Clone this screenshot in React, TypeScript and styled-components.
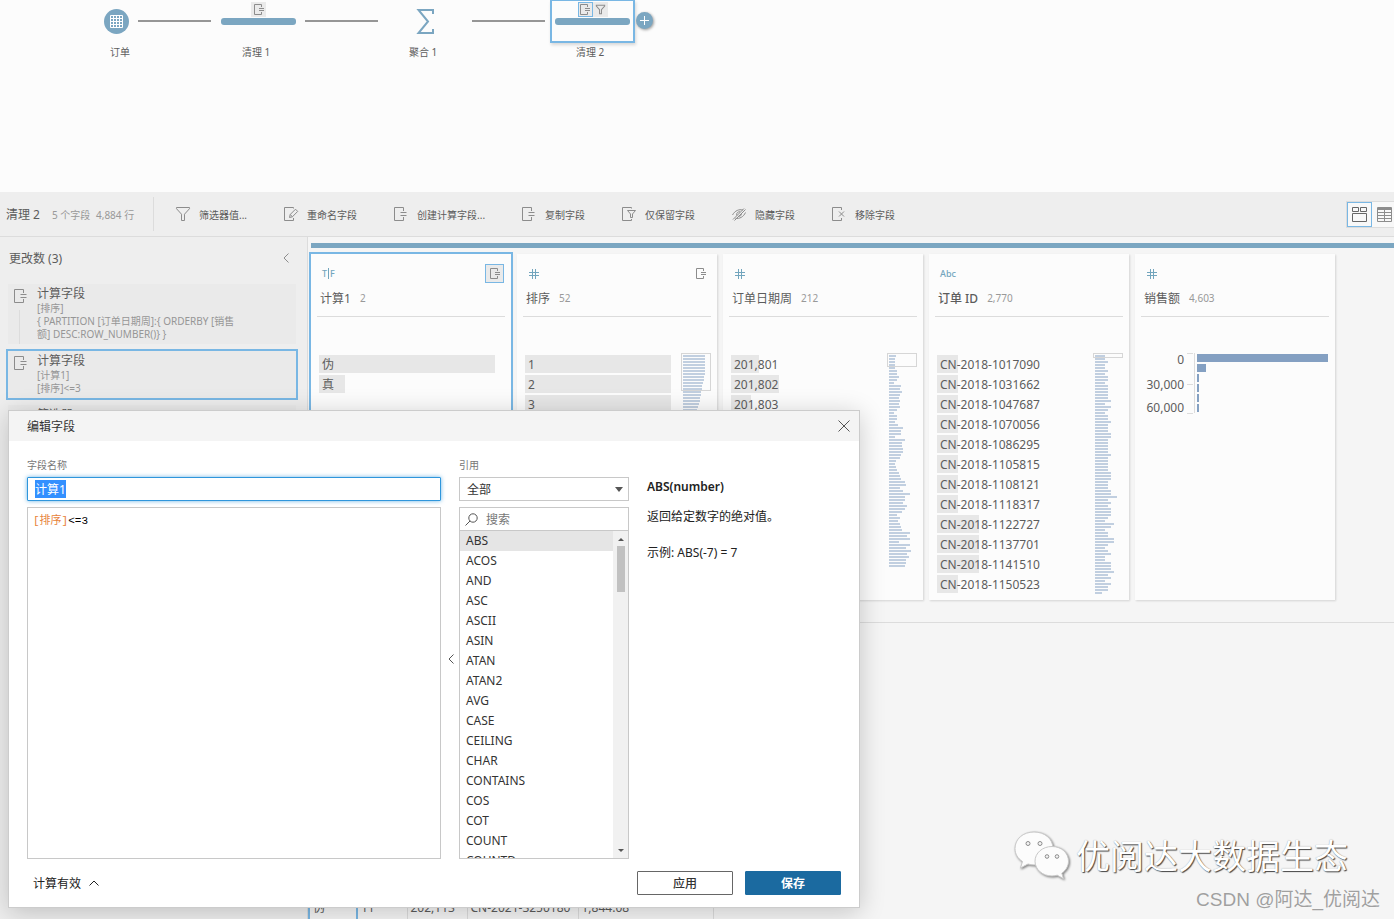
import React, { useEffect, useRef } from "react";
import styled, { createGlobalStyle, css } from "styled-components";

const FONT = '"Noto Sans", "Noto Sans CJK SC", sans-serif';
const BLUE = "#7ba6c1";
const SELECT = "#79b7e4";

const GlobalStyle = createGlobalStyle`
  *, *::before, *::after { box-sizing: border-box; }
  body { margin: 0; font-family: ${FONT}; font-size: 12px; color: #5c5c5c; background: #f5f5f5; }
  button, input, select, textarea { font: inherit; color: inherit; margin: 0; }
  button { padding: 0; border: 0; background: none; cursor: pointer; }
  ul { margin: 0; padding: 0; list-style: none; }
  p, h1, h2, h3 { margin: 0; font-size: inherit; font-weight: 400; }
`;

const Page = styled.div`
  position: relative;
  display: flex;
  flex-direction: column;
  height: 100vh;
  overflow: hidden;
`;

/* ---------- icons ---------- */

const Svg = styled.svg`
  display: block;
  flex: none;
  fill: none;
  stroke: currentColor;
  overflow: visible;
`;

const CalcIcon = ({ small = false }: { small?: boolean }) =>
  small ? (
    <Svg width="10" height="11" viewBox="0 0 10 11">
      <path d="M7.5 3V.5h-7v10h7V8M5 4.5h5M5 6.5h5" />
    </Svg>
  ) : (
    <Svg width="14" height="14" viewBox="0 0 14 14">
      <path d="M9.500 4V.5h-9v13h9V10M6.500 5.500h6M6.500 8.500h6" />
    </Svg>
  );

const FilterIcon = ({ size = 14 }: { size?: number }) => (
  <Svg width={size} height={size} viewBox="0 0 14 14" strokeWidth={size < 14 ? 1.6 : 1}>
    <path d="M.5.5h13v1.2L8.500 7.200v6.300h-3V7.200L.5 1.700z" />
  </Svg>
);

const RenameIcon = () => (
  <Svg width="14" height="14" viewBox="0 0 14 14">
    <path d="M9.500 1.500v-1h-9v13h9V11" />
    <path d="M5.500 10.500l.7-3 5.300-5.300 2.200 2.200-5.300 5.400zM6.200 7.500l2.200 2.200" />
  </Svg>
);

const KeepIcon = () => (
  <Svg width="14" height="14" viewBox="0 0 14 14">
    <path d="M9.500 1.500v-1h-9v13h9V12" />
    <path d="M5.500 3.500h8L10.500 7v3.500h-2V7z" />
  </Svg>
);

const HideIcon = () => (
  <Svg width="14" height="14" viewBox="0 0 14 14">
    <path d="M.5 8C3 3.500 7 2 11 3M13.500 5.500C11.500 10 7.500 12 3.500 11.300M1 12.500L12 1.500M2.500 13.500L13.500 2.500" />
    <path d="M4.800 8.500C4 6 6 4.500 8 4.800M9.500 6.500C9.500 8.500 8 9.500 6.500 9.300" />
  </Svg>
);

const RemoveIcon = () => (
  <Svg width="14" height="14" viewBox="0 0 14 14">
    <path d="M9.500 3V.5h-9v13h9V11M7 4.500l5 5M12 4.500l-5 5" />
  </Svg>
);

const HashIcon = () => (
  <Svg width="11" height="10" viewBox="0 0 11 10">
    <path d="M4.500 0v10M7.500 0v10M1 3.500h10M1 6.500h10" />
  </Svg>
);

const Chevron = ({ dir = "left" }: { dir?: "left" | "up" }) =>
  dir === "left" ? (
    <Svg width="6" height="10" viewBox="0 0 6 10">
      <path d="M5.500.5L1 5l4.500 4.500" />
    </Svg>
  ) : (
    <Svg width="10" height="6" viewBox="0 0 10 6">
      <path d="M.5 5.500L5 1l4.500 4.500" />
    </Svg>
  );

/* ---------- flow canvas ---------- */

const Canvas = styled.section`
  position: relative;
  flex: none;
  height: 192px;
  background: #fcfcfc;
`;

const Node = styled.div<{ $x: number; $w: number; $selected?: boolean }>`
  position: absolute;
  left: ${(p) => p.$x}px;
  top: 0;
  width: ${(p) => p.$w}px;
  height: 43px;
  display: flex;
  flex-direction: column;
  align-items: center;
  ${(p) =>
    p.$selected &&
    css`
      border: 2px solid ${SELECT};
      border-top-width: 1px;
      box-shadow: 1px 2px 3px rgba(0, 0, 0, 0.15);
    `}
`;

const NodeLabel = styled.span<{ $x: number }>`
  position: absolute;
  left: ${(p) => p.$x}px;
  top: 44px;
  font-size: 10px;
  line-height: 16px;
`;

const Badges = styled.div<{ $pad: number }>`
  display: flex;
  padding-top: ${(p) => p.$pad}px;
  padding-bottom: 1px;
`;

const Badge = styled.span<{ $on?: boolean }>`
  display: flex;
  align-items: center;
  justify-content: center;
  width: 15px;
  height: 15px;
  color: #8c8c8c;
  background: #eaeaea;
  border: ${(p) => (p.$on ? `1px solid ${SELECT}` : "0")};
`;

const StepBar = styled.div`
  width: 75px;
  height: 7px;
  border-radius: 3px;
  background: ${BLUE};
`;

const Link = styled.div<{ $x: number }>`
  position: absolute;
  left: ${(p) => p.$x}px;
  top: 20px;
  width: 73px;
  height: 2px;
  background: #969696;
`;

const Round = styled.div<{ $x: number; $y: number; $d: number }>`
  position: absolute;
  left: ${(p) => p.$x}px;
  top: ${(p) => p.$y}px;
  width: ${(p) => p.$d}px;
  height: ${(p) => p.$d}px;
  display: flex;
  align-items: center;
  justify-content: center;
  border-radius: 50%;
  background: ${BLUE};
  color: #fff;
`;

const AddButton = styled.button`
  position: absolute;
  left: 636px;
  top: 12px;
  width: 17px;
  height: 17px;
  display: flex;
  align-items: center;
  justify-content: center;
  border-radius: 50%;
  background: ${BLUE};
  color: #fff;
  box-shadow: 1px 1px 3px rgba(0, 0, 0, 0.4);
`;

/* ---------- toolbar ---------- */

const Toolbar = styled.header`
  display: flex;
  align-items: center;
  flex: none;
  height: 45px;
  padding-left: 6px;
  background: #eee;
  border-bottom: 1px solid #dcdcdc;
`;

const Summary = styled.div`
  display: flex;
  align-items: center;
  width: 148px;
  height: 34px;
  border-right: 1px solid #dcdcdc;
  white-space: nowrap;
`;

const StepTitle = styled.h1`
  width: 46px;
`;

const Count = styled.span`
  width: 44px;
  font-size: 10px;
  color: #999;
`;

const Tools = styled.nav`
  display: flex;
  gap: 37px;
  padding-left: 22px;
`;

const Tool = styled.button`
  display: flex;
  align-items: center;
  gap: 9px;
  height: 24px;
  font-size: 10px;
  white-space: nowrap;
  svg { color: #8c8c8c; }
`;

const Views = styled.div`
  display: flex;
  margin-left: auto;
  height: 27px;
  border: 1px solid #dcdcdc;
  border-right: 0;
  background: #f8f8f8;
`;

const ViewButton = styled.button<{ $on?: boolean }>`
  display: flex;
  align-items: center;
  justify-content: center;
  width: ${(p) => (p.$on ? 25 : 22)}px;
  padding-left: ${(p) => (p.$on ? 0 : 3)}px;
  border: ${(p) => (p.$on ? `1px solid ${SELECT}` : "0")};
  color: ${(p) => (p.$on ? "#666" : "#8c8c8c")};
`;

/* ---------- changes panel ---------- */

const Workspace = styled.div`
  display: flex;
  flex: 1;
  min-height: 0;
`;

const Side = styled.aside`
  flex: none;
  width: 308px;
  background: #eee;
  border-right: 1px solid #dcdcdc;
`;

const SideHead = styled.div`
  display: flex;
  align-items: center;
  justify-content: space-between;
  height: 42px;
  padding: 0 18px 0 9px;
  button { color: #8c8c8c; }
`;

const Changes = styled.ul`
  display: flex;
  flex-direction: column;
  gap: 7px;
  padding: 5px 11px 0 8px;
`;

const Change = styled.li<{ $on?: boolean }>`
  display: flex;
  gap: 9px;
  padding: 0 50px 3px 6px;
  background: #eaeaea;
  outline: ${(p) => (p.$on ? `2px solid ${SELECT}` : "0")};
`;

const ChangeMark = styled.div`
  display: flex;
  flex-direction: column;
  gap: 7px;
  width: 14px;
  padding-top: 5px;
  color: #8c8c8c;
`;

const Rail = styled.i`
  flex: 1;
  width: 1px;
  margin: 0 0 -3px 5px;
  background: #dcdcdc;
`;

const ChangeTitle = styled.h3`
  height: 18px;
  line-height: 20px;
`;

const ChangeText = styled.p`
  font-size: 10px;
  line-height: 13px;
  color: #969696;
`;

/* ---------- profile cards ---------- */

const Main = styled.main`
  display: flex;
  flex-direction: column;
  flex: 1;
  min-width: 0;
`;

const Profile = styled.section`
  flex: none;
  padding: 6px 0 22px 3px;
  border-bottom: 1px solid #dcdcdc;
`;

const StepStrip = styled.div`
  height: 5px;
  background: ${BLUE};
`;

const Cards = styled.div`
  display: flex;
  gap: 6px;
  margin-top: 6px;
`;

const Card = styled.article<{ $on?: boolean }>`
  flex: none;
  width: 200px;
  background: #fcfcfc;
  outline: ${(p) => (p.$on ? `2px solid ${SELECT}` : "0")};
  box-shadow: 1px 1px 2px rgba(0, 0, 0, 0.14);
`;

const CardTop = styled.div`
  display: flex;
  align-items: center;
  justify-content: space-between;
  height: 29px;
  padding: 10px 7px 0 11px;
  color: #72a5bd;
`;

const TypeText = styled.span`
  display: flex;
  font-size: 9px;
  font-weight: 500;
  line-height: 11px;
`;

const TypeRule = styled.i`
  width: 1px;
  margin: 0 1px;
  background: currentColor;
`;

const CardAction = styled.button<{ $on?: boolean }>`
  display: flex;
  align-items: center;
  justify-content: center;
  width: 19px;
  height: 19px;
  color: #8c8c8c;
  background: ${(p) => (p.$on ? "#eaeaea" : "none")};
  border: ${(p) => (p.$on ? `1px solid ${SELECT}` : "0")};
`;

const CardName = styled.div`
  display: flex;
  align-items: center;
  gap: 9px;
  height: 34px;
  margin: 0 6px;
  padding: 0 3px 4px;
  border-bottom: 1px solid #dcdcdc;
`;

const Name = styled.h2<{ $strong?: boolean }>`
  font-weight: ${(p) => (p.$strong ? 500 : 400)};
`;

const Distinct = styled.span`
  font-size: 10px;
  color: #999;
`;

const CardBody = styled.div`
  display: flex;
  padding: 36px 6px 5px 8px;
`;

const Values = styled.ul`
  display: flex;
  flex-direction: column;
  flex: 1;
  gap: 2px;
  padding-top: 2px;
`;

const Value = styled.li`
  display: grid;
  align-items: start;
  height: 18px;
  white-space: nowrap;
  > * { grid-area: 1 / 1; }
`;

const ValueBar = styled.i`
  height: 18px;
  background: #e7e7e7;
`;

const ValueText = styled.span`
  padding-left: 3px;
  line-height: 20px;
`;

const Chart = styled.svg`
  display: block;
  flex: none;
  overflow: visible;
`;

const MiniMap = ({ widths, frame }: { widths: number[]; frame: number }) => (
  <Chart width="30" height={widths.length * 3 + 2}>
    {widths.map((w, i) => (
      <rect key={i} x="2" y={2 + i * 3} width={w} height="2" fill="#c1cfe0" />
    ))}
    <rect x=".5" y=".5" width="29" height={frame - 1} fill="none" stroke="#d6d6d6" />
  </Chart>
);

const Histogram = () => (
  <Chart width="186" height="64" fontSize="12" fill="#5c5c5c">
    {([["0", 11], ["30,000", 36], ["60,000", 59]] as [string, number][]).map(([t, y]) => (
      <text key={t} x="41" y={y} textAnchor="end">{t}</text>
    ))}
    <path d="M51.500 0v60M44 .5h6M44 31.500h6M44 60.500h6" stroke="#dcdcdc" fill="none" />
    {[131, 9, 2, 2, 2, 2].map((w, i) => (
      <rect key={i} x="54" y={1 + i * 10} width={w} height="8" fill="#84a0c2" />
    ))}
  </Chart>
);

/* ---------- data grid ---------- */

const GridPane = styled.section`
  display: flex;
  flex: 1;
  align-items: flex-end;
  min-height: 0;
`;

const Table = styled.table`
  border-collapse: collapse;
  table-layout: fixed;
  width: 404px;
`;

const Cell = styled.td<{ $w: number; $on?: boolean }>`
  width: ${(p) => p.$w}px;
  height: 22px;
  padding: 0 3px;
  line-height: 20px;
  white-space: nowrap;
  border-right: 1px solid #dcdcdc;
  ${(p) =>
    p.$on &&
    css`
      border-left: 2px solid ${SELECT};
      border-right: 2px solid ${SELECT};
    `}
`;

/* ---------- dialog ---------- */

const Dialog = styled.form`
  position: absolute;
  left: 8px;
  top: 410px;
  bottom: 11px;
  width: 852px;
  display: flex;
  flex-direction: column;
  color: #333;
  background: #fff;
  border: 1px solid #ccc;
  box-shadow: 0 4px 24px rgba(0, 0, 0, 0.2);
`;

const DialogHead = styled.div`
  display: flex;
  align-items: center;
  justify-content: space-between;
  flex: none;
  height: 30px;
  padding: 0 9px 0 18px;
  background: #f4f4f4;
  button { color: #555; }
`;

const DialogBody = styled.div`
  display: flex;
  flex: 1;
  min-height: 0;
  padding: 16px 18px 0;
`;

const Column = styled.div<{ $w: number }>`
  display: flex;
  flex-direction: column;
  width: ${(p) => p.$w}px;
`;

const Label = styled.label`
  height: 20px;
  font-size: 10px;
  line-height: 16px;
  color: #777;
`;

const NameInput = styled.input`
  height: 24px;
  padding: 0 7px;
  border: 1px solid #2f96dc;
  border-radius: 1px;
  outline: 0;
  background: #fff;
  box-shadow: 0 0 4px rgba(47, 150, 220, 0.7);
  &::selection { color: #fff; background: #3390ff; }
`;

const Editor = styled.div`
  display: grid;
  flex: 1;
  min-height: 0;
  margin-top: 6px;
  border: 1px solid #c8c8c8;
  font-family: "Liberation Mono", "Noto Sans CJK SC", monospace;
  font-size: 11px;
  line-height: 16px;
  > * { grid-area: 1 / 1; }
`;

const Highlight = styled.pre`
  margin: 0;
  padding: 5px;
  font: inherit;
  color: #000;
`;

const FieldToken = styled.span`
  color: #e8833a;
`;

const Formula = styled.textarea`
  padding: 5px;
  border: 0;
  outline: 0;
  resize: none;
  color: transparent;
  caret-color: #000;
  background: none;
`;

const Collapse = styled.button`
  align-self: center;
  display: flex;
  justify-content: center;
  width: 18px;
  padding: 2px 0 0 1px;
  color: #555;
`;

const SelectWrap = styled.div`
  display: grid;
  align-items: center;
  > * { grid-area: 1 / 1; }
  svg { justify-self: end; margin-right: 6px; pointer-events: none; }
`;

const Select = styled.select`
  height: 24px;
  padding: 0 7px;
  border: 1px solid #c8c8c8;
  border-radius: 0;
  background: #fff;
  appearance: none;
`;

const Search = styled.div`
  display: flex;
  align-items: center;
  gap: 8px;
  flex: none;
  height: 24px;
  margin-top: 6px;
  padding-left: 5px;
  color: #555;
  border: 1px solid #c8c8c8;
  input { flex: 1; min-width: 0; padding: 0; border: 0; outline: 0; background: none; }
  input::placeholder { color: #777; opacity: 1; }
`;

const ListBox = styled.div`
  display: flex;
  flex: 1;
  min-height: 0;
  border: 1px solid #c8c8c8;
  border-top: 0;
`;

const Functions = styled.ul`
  flex: 1;
  overflow: hidden;
`;

const FunctionItem = styled.li<{ $on?: boolean }>`
  height: 20px;
  padding-left: 6px;
  line-height: 20px;
  background: ${(p) => (p.$on ? "#e5e5e5" : "none")};
`;

const Scrollbar = styled.div`
  display: flex;
  flex-direction: column;
  align-items: center;
  width: 15px;
  padding: 7px 0 6px;
  background: #f1f1f1;
`;

const Thumb = styled.i`
  width: 8px;
  height: 46px;
  margin: 5px 0 auto;
  background: #c1c1c1;
`;

const Help = styled.div`
  display: flex;
  flex: 1;
  flex-direction: column;
  gap: 12px;
  padding: 21px 0 0 18px;
  line-height: 18px;
  color: #222;
`;

const HelpTitle = styled.h3`
  font-weight: 600;
`;

const Example = styled.p`
  padding-top: 6px;
`;

const DialogFoot = styled.div`
  display: flex;
  align-items: center;
  flex: none;
  gap: 12px;
  height: 48px;
  padding: 0 18px 0 24px;
`;

const Status = styled.button`
  display: flex;
  align-items: center;
  gap: 8px;
  margin-right: auto;
  color: #222;
`;

const Action = styled.button<{ $primary?: boolean }>`
  width: 96px;
  height: 24px;
  border: 1px solid ${(p) => (p.$primary ? "#1b6aa0" : "#666")};
  border-radius: 1px;
  color: ${(p) => (p.$primary ? "#fff" : "#333")};
  background: ${(p) => (p.$primary ? "#1b6aa0" : "#fff")};
  font-weight: ${(p) => (p.$primary ? 700 : 500)};
`;

/* ---------- watermarks ---------- */

const Brand = styled.div`
  position: absolute;
  right: 46px;
  bottom: 37px;
  display: flex;
  align-items: center;
  gap: 6px;
  font-size: 34px;
  line-height: 52px;
  color: #fff;
  text-shadow: 1px 1px 1px #444, 0 0 1px #999;
  svg { filter: drop-shadow(1px 1px 1px rgba(0, 0, 0, 0.5)); }
`;

const Credit = styled.div`
  position: absolute;
  right: 14px;
  bottom: 5px;
  font-family: "Liberation Sans", "Noto Sans CJK SC", sans-serif;
  font-size: 19px;
  line-height: 28px;
  color: #a0a0a0;
  text-shadow: 0 0 1px #fff;
`;

const WeChat = () => (
  <svg width="56" height="50" viewBox="0 0 56 50" fill="#fcfcfc" stroke="#c8c8c8" strokeWidth="1">
    <path d="M20 1C9 1 1 8 1 17.500c0 5.500 2.800 10 7.500 13L6.500 37l7.500-4c2 .6 4 .9 6 .9C31 34 39 27 39 17.500S31 1 20 1z" />
    <path d="M38 15.500c-9.500 0-17 6.500-17 14.700S28.500 45 38 45c1.800 0 3.600-.3 5.200-.8l6.300 3.500-1.700-5.500c4-2.700 6.700-7 6.700-12 0-8.200-7-14.700-16.500-14.700z" />
    <g fill="#f4f4f4" stroke="#8c8c8c">
      <circle cx="14" cy="12.500" r="2" />
      <circle cx="26" cy="12.500" r="2" />
      <circle cx="33" cy="25.500" r="1.800" />
      <circle cx="43" cy="25.500" r="1.800" />
    </g>
  </svg>
);

/* ---------- data ---------- */

const tools: [string, React.ReactNode][] = [
  ["筛选器值...", <FilterIcon />],
  ["重命名字段", <RenameIcon />],
  ["创建计算字段...", <CalcIcon />],
  ["复制字段", <CalcIcon />],
  ["仅保留字段", <KeepIcon />],
  ["隐藏字段", <HideIcon />],
  ["移除字段", <RemoveIcon />],
];

type ChangeData = { title: string; lines: string[]; rail?: boolean; on?: boolean };

const changes: ChangeData[] = [
  { title: "计算字段", lines: ["[排序]", "{ PARTITION [订单日期周]:{ ORDERBY [销售额] DESC:ROW_NUMBER()} }"], rail: true },
  { title: "计算字段", lines: ["[计算1]", "[排序]<=3"], on: true },
  { title: "筛选器", lines: [] },
];

const rankMap = [22, 22, 22, 22, 22, 22, 22, 21, 21, 20, 19, 19, 18, 18, 17, 17, 16, 15, 14, 14, 13, 12];

const weekMap = [
  7, 6, 6, 6, 6, 8, 8, 10, 8, 5, 12, 11, 13, 11, 10, 11, 10, 11, 8, 5, 8, 8, 6, 9, 14, 12, 12, 6, 16, 13, 13, 14, 14,
  12, 11, 7, 6, 7, 8, 10, 11, 12, 16, 17, 11, 14, 21, 16, 16, 14, 18, 16, 13, 8, 11, 9, 11, 12, 13, 21, 18, 21, 10, 21,
  17, 22, 18, 20, 17, 17, 16,
];

const orderMap = [
  10, 10, 13, 10, 10, 13, 10, 13, 13, 10, 13, 13, 13, 13, 13, 16, 10, 16, 13, 10, 13, 13, 16, 13, 13, 13, 16, 16, 13,
  13, 13, 13, 13, 16, 13, 13, 13, 13, 13, 16, 16, 16, 13, 13, 13, 16, 16, 22, 13, 16, 13, 16, 16, 16, 13, 10, 19, 16,
  10, 13, 13, 19, 19, 13, 10, 13, 16, 10, 10, 16, 16, 16, 19, 13, 16, 10, 16, 13, 13, 7,
];

const orders: [string, number][] = [
  ["CN-2018-1017090", 21], ["CN-2018-1031662", 21], ["CN-2018-1047687", 21], ["CN-2018-1070056", 21],
  ["CN-2018-1086295", 21], ["CN-2018-1105815", 21], ["CN-2018-1108121", 21], ["CN-2018-1118317", 21],
  ["CN-2018-1122727", 42], ["CN-2018-1137701", 42], ["CN-2018-1141510", 42], ["CN-2018-1150523", 21],
];

type CardData = {
  name: string;
  count: string;
  type: React.ReactNode;
  on?: boolean;
  strong?: boolean;
  calc?: boolean;
  values?: [string, number][];
  map?: number[];
  frame?: number;
};

const cards: CardData[] = [
  {
    name: "计算1",
    count: "2",
    type: <TypeText>T<TypeRule />F</TypeText>,
    on: true,
    calc: true,
    values: [["伪", 176], ["真", 26]],
  },
  { name: "排序", count: "52", type: <HashIcon />, calc: true, values: [["1", 146], ["2", 146], ["3", 146]], map: rankMap, frame: 38 },
  { name: "订单日期周", count: "212", type: <HashIcon />, values: [["201,801", 28], ["201,802", 48], ["201,803", 20]], map: weekMap, frame: 14 },
  { name: "订单 ID", count: "2,770", type: <TypeText>Abc</TypeText>, strong: true, values: orders, map: orderMap, frame: 5 },
  { name: "销售额", count: "4,603", type: <HashIcon /> },
];

const functions = [
  "ABS", "ACOS", "AND", "ASC", "ASCII", "ASIN", "ATAN", "ATAN2", "AVG", "CASE", "CEILING", "CHAR", "CONTAINS", "COS",
  "COT", "COUNT", "COUNTD",
];

/* ---------- views ---------- */

const FlowCanvas = () => (
  <Canvas>
    <Round $x={104} $y={9} $d={25}>
      <Svg width="13" height="13" viewBox="0 0 13 13">
        <path d="M.5.5h12v12H.5zM.5 3.500h12M.5 6.500h12M.5 9.500h12M3.500 0v13M6.500 0v13M9.500 0v13" />
      </Svg>
    </Round>
    <NodeLabel $x={110}>订单</NodeLabel>
    <Link $x={138} />
    <Node $x={221} $w={75}>
      <Badges $pad={2}>
        <Badge><CalcIcon small /></Badge>
      </Badges>
      <StepBar />
    </Node>
    <NodeLabel $x={242}>清理 1</NodeLabel>
    <Link $x={305} />
    <Node $x={416} $w={19}>
      <svg width="19" height="35" fill="none" stroke={BLUE} strokeWidth="2">
        <path d="M17 14V10H2.500L12 21.500 2.500 33H17v-4" />
      </svg>
    </Node>
    <NodeLabel $x={409}>聚合 1</NodeLabel>
    <Link $x={472} />
    <Node $x={550} $w={85} $selected>
      <Badges $pad={1}>
        <Badge $on><CalcIcon small /></Badge>
        <Badge><FilterIcon size={9} /></Badge>
      </Badges>
      <StepBar />
    </Node>
    <NodeLabel $x={576}>清理 2</NodeLabel>
    <AddButton type="button" aria-label="添加步骤">
      <Svg width="9" height="9" viewBox="0 0 9 9">
        <path d="M4.500 0v9M0 4.500h9" />
      </Svg>
    </AddButton>
  </Canvas>
);

const StepToolbar = () => (
  <Toolbar>
    <Summary>
      <StepTitle>清理 2</StepTitle>
      <Count>5 个字段</Count>
      <Count>4,884 行</Count>
    </Summary>
    <Tools>
      {tools.map(([label, icon]) => (
        <Tool key={label} type="button">
          {icon}
          {label}
        </Tool>
      ))}
    </Tools>
    <Views>
      <ViewButton $on type="button" aria-label="配置文件视图">
        <Svg width="15" height="15" viewBox="0 0 15 15">
          <path d="M.5.5h6v4h-6zM8.500.5h6v4h-6zM.5 6.500h14v8H.5z" />
        </Svg>
      </ViewButton>
      <ViewButton type="button" aria-label="数据网格视图">
        <Svg width="15" height="15" viewBox="0 0 15 15">
          <path d="M.5.5h14v14H.5zM.5 1.500h14M.5 2.500h14M.5 5.500h14M.5 8.500h14M.5 11.500h14M7.500 3v12" />
        </Svg>
      </ViewButton>
    </Views>
  </Toolbar>
);

const ChangesPanel = () => (
  <Side>
    <SideHead>
      <h2>更改数 (3)</h2>
      <button type="button" aria-label="折叠"><Chevron /></button>
    </SideHead>
    <Changes>
      {changes.map((c, i) => (
        <Change key={i} $on={c.on}>
          <ChangeMark>
            <CalcIcon />
            {c.rail && <Rail />}
          </ChangeMark>
          <div>
            <ChangeTitle>{c.title}</ChangeTitle>
            {c.lines.map((l) => <ChangeText key={l}>{l}</ChangeText>)}
          </div>
        </Change>
      ))}
    </Changes>
  </Side>
);

const ProfileCard = ({ card }: { card: CardData }) => (
  <Card $on={card.on}>
    <CardTop>
      {card.type}
      {card.calc && (
        <CardAction type="button" $on={card.on} aria-label="计算字段"><CalcIcon small /></CardAction>
      )}
    </CardTop>
    <CardName>
      <Name $strong={card.strong}>{card.name}</Name>
      <Distinct>{card.count}</Distinct>
    </CardName>
    <CardBody>
      {card.values ? (
        <Values>
          {card.values.map(([text, width]) => (
            <Value key={text}>
              <ValueBar style={{ width }} />
              <ValueText>{text}</ValueText>
            </Value>
          ))}
        </Values>
      ) : (
        <Histogram />
      )}
      {card.map && <MiniMap widths={card.map} frame={card.frame ?? 5} />}
    </CardBody>
  </Card>
);

const EditDialog = () => {
  const nameRef = useRef<HTMLInputElement>(null);
  useEffect(() => {
    nameRef.current?.focus({ preventScroll: true });
    nameRef.current?.select();
  }, []);
  return (
    <Dialog role="dialog" aria-labelledby="dialog-title" onSubmit={(e) => e.preventDefault()}>
      <DialogHead>
        <h2 id="dialog-title">编辑字段</h2>
        <button type="button" aria-label="关闭">
          <Svg width="12" height="12" viewBox="0 0 12 12">
            <path d="M.5.5l11 11M11.500.5l-11 11" />
          </Svg>
        </button>
      </DialogHead>
      <DialogBody>
        <Column $w={414}>
          <Label htmlFor="field-name">字段名称</Label>
          <NameInput id="field-name" ref={nameRef} defaultValue="计算1" />
          <Editor>
            <Highlight aria-hidden="true"><FieldToken>[排序]</FieldToken>{"<=3"}</Highlight>
            <Formula aria-label="公式" spellCheck={false} defaultValue={"[排序]<=3"} />
          </Editor>
        </Column>
        <Collapse type="button" aria-label="折叠引用"><Chevron /></Collapse>
        <Column $w={170}>
          <Label htmlFor="reference">引用</Label>
          <SelectWrap>
            <Select id="reference" defaultValue="全部">
              <option>全部</option>
            </Select>
            <svg width="8" height="5" fill="#555"><path d="M0 0h8L4 5z" /></svg>
          </SelectWrap>
          <Search>
            <Svg width="13" height="13" viewBox="0 0 13 13">
              <circle cx="8" cy="5" r="4.200" />
              <path d="M5 8L.5 12.500" />
            </Svg>
            <input type="text" aria-label="搜索" placeholder="搜索" />
          </Search>
          <ListBox>
            <Functions>
              {functions.map((f, i) => (
                <FunctionItem key={f} $on={i === 0}>{f}</FunctionItem>
              ))}
            </Functions>
            <Scrollbar>
              <svg width="6" height="3" fill="#555"><path d="M0 3h6L3 0z" /></svg>
              <Thumb />
              <svg width="6" height="3" fill="#555"><path d="M0 0h6L3 3z" /></svg>
            </Scrollbar>
          </ListBox>
        </Column>
        <Help>
          <HelpTitle>ABS(number)</HelpTitle>
          <p>返回给定数字的绝对值。</p>
          <Example>示例: ABS(-7) = 7</Example>
        </Help>
      </DialogBody>
      <DialogFoot>
        <Status type="button">计算有效<Chevron dir="up" /></Status>
        <Action type="button">应用</Action>
        <Action type="submit" $primary>保存</Action>
      </DialogFoot>
    </Dialog>
  );
};

export default function App() {
  return (
    <Page>
      <GlobalStyle />
      <FlowCanvas />
      <StepToolbar />
      <Workspace>
        <ChangesPanel />
        <Main>
          <Profile>
            <StepStrip />
            <Cards>
              {cards.map((c) => <ProfileCard key={c.name} card={c} />)}
            </Cards>
          </Profile>
          <GridPane>
            <Table>
              <tbody>
                <tr>
                  <Cell $w={48} $on>伪</Cell>
                  <Cell $w={50}>11</Cell>
                  <Cell $w={60}>202,113</Cell>
                  <Cell $w={111}>CN-2021-3250180</Cell>
                  <Cell $w={135}>1,844.08</Cell>
                </tr>
              </tbody>
            </Table>
          </GridPane>
        </Main>
      </Workspace>
      <EditDialog />
      <Brand><WeChat />优阅达大数据生态</Brand>
      <Credit>CSDN @阿达_优阅达</Credit>
    </Page>
  );
}
